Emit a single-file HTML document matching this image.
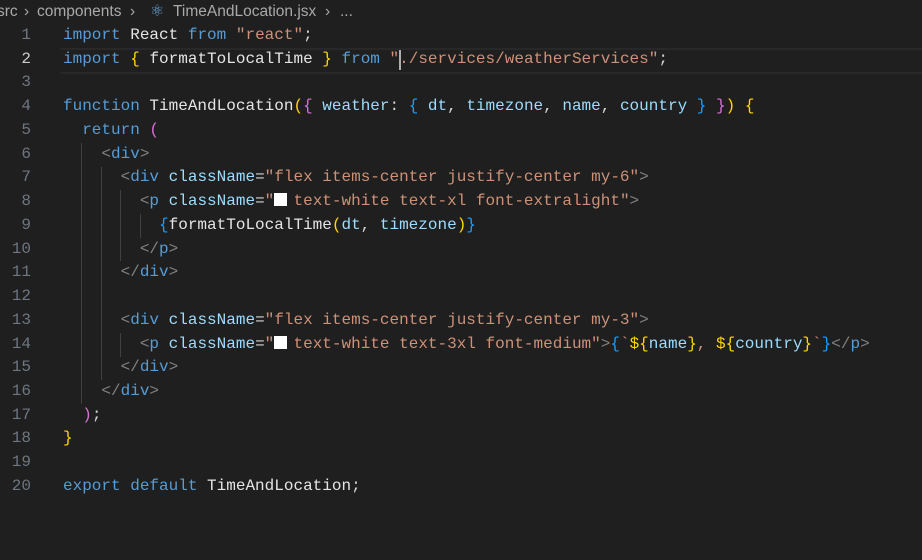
<!DOCTYPE html>
<html><head><meta charset="utf-8"><style>
body{margin:0;width:922px;height:560px;background:#1f1f1f;overflow:hidden;position:relative;font-family:"Liberation Mono",monospace}
.bc{position:absolute;top:2px;font:15.5px "Liberation Sans",sans-serif;color:#a9a9a9;white-space:pre;line-height:20px}
.ln{position:absolute;left:0;width:31px;text-align:right;color:#6e7681;font-size:16px}
.code{position:absolute;left:63px;font-size:16px;color:#d4d4d4}
.row{height:23.74px;line-height:23.74px;position:relative;white-space:pre}
.k{color:#569cd6}.s{color:#ce9178}.v{color:#9cdcfe}.f{color:#dcdcaa}.w{color:#e4e4e4}
.g{color:#ffd700}.p{color:#da70d6}.b{color:#179fff}.t{color:#808080}
.sq{display:inline-block;width:13px;height:13px;background:#fff;vertical-align:-1px;margin-right:-3.4px}
.guide{position:absolute;width:1px;background:#404040}
</style></head><body>
<div class="bc" style="left:-3px">src</div>
<div class="bc" style="left:24px">›</div>
<div class="bc" style="left:37px">components</div>
<div class="bc" style="left:130px">›</div>
<div class="bc" style="left:150px;color:#6aa6d8;font-size:16px">⚛</div>
<div class="bc" style="left:173px">TimeAndLocation.jsx</div>
<div class="bc" style="left:325px">›</div>
<div class="bc" style="left:340px">...</div>
<div style="position:absolute;left:60px;right:0;top:48px;height:22px;border-top:2px solid #282828;border-bottom:2px solid #282828"></div>
<div style="position:absolute;left:399px;top:50px;width:2px;height:20px;background:#aeafad"></div>
<div class="guide" style="left:81px;top:143px;height:261px"></div>
<div class="guide" style="left:101px;top:167px;height:213px"></div>
<div class="guide" style="left:120px;top:190px;height:71px"></div>
<div class="guide" style="left:120px;top:333px;height:24px"></div>
<div class="guide" style="left:140px;top:214px;height:24px"></div>
<div class="ln" style="top:24px"><div class="row">1</div><div class="row" style="color:#ccc">2</div><div class="row">3</div><div class="row">4</div><div class="row">5</div><div class="row">6</div><div class="row">7</div><div class="row">8</div><div class="row">9</div><div class="row">10</div><div class="row">11</div><div class="row">12</div><div class="row">13</div><div class="row">14</div><div class="row">15</div><div class="row">16</div><div class="row">17</div><div class="row">18</div><div class="row">19</div><div class="row">20</div></div>
<div class="code" style="top:24px">
<div class="row"><span class="k">import</span> <span class="w">React</span> <span class="k">from</span> <span class="s">"react"</span>;</div>
<div class="row"><span class="k">import</span> <span class="g">{</span> <span class="w">formatToLocalTime</span> <span class="g">}</span> <span class="k">from</span> <span class="s">"./services/weatherServices"</span>;</div>
<div class="row"> </div>
<div class="row"><span class="k">function</span> <span class="w">TimeAndLocation</span><span class="g">(</span><span class="p">{</span> <span class="v">weather</span>: <span class="b">{</span> <span class="v">dt</span>, <span class="v">timezone</span>, <span class="v">name</span>, <span class="v">country</span> <span class="b">}</span> <span class="p">}</span><span class="g">)</span> <span class="g">{</span></div>
<div class="row">  <span class="k">return</span> <span class="p">(</span></div>
<div class="row">    <span class="t">&lt;</span><span class="k">div</span><span class="t">&gt;</span></div>
<div class="row">      <span class="t">&lt;</span><span class="k">div</span> <span class="v">className</span>=<span class="s">"flex items-center justify-center my-6"</span><span class="t">&gt;</span></div>
<div class="row">        <span class="t">&lt;</span><span class="k">p</span> <span class="v">className</span>=<span class="s">"<span class="sq"></span> text-white text-xl font-extralight"</span><span class="t">&gt;</span></div>
<div class="row">          <span class="b">{</span><span class="w">formatToLocalTime</span><span class="g">(</span><span class="v">dt</span>, <span class="v">timezone</span><span class="g">)</span><span class="b">}</span></div>
<div class="row">        <span class="t">&lt;/</span><span class="k">p</span><span class="t">&gt;</span></div>
<div class="row">      <span class="t">&lt;/</span><span class="k">div</span><span class="t">&gt;</span></div>
<div class="row"> </div>
<div class="row">      <span class="t">&lt;</span><span class="k">div</span> <span class="v">className</span>=<span class="s">"flex items-center justify-center my-3"</span><span class="t">&gt;</span></div>
<div class="row">        <span class="t">&lt;</span><span class="k">p</span> <span class="v">className</span>=<span class="s">"<span class="sq"></span> text-white text-3xl font-medium"</span><span class="t">&gt;</span><span class="b">{</span><span class="s">`</span><span class="g">${</span><span class="v">name</span><span class="g">}</span><span class="s">, </span><span class="g">${</span><span class="v">country</span><span class="g">}</span><span class="s">`</span><span class="b">}</span><span class="t">&lt;/</span><span class="k">p</span><span class="t">&gt;</span></div>
<div class="row">      <span class="t">&lt;/</span><span class="k">div</span><span class="t">&gt;</span></div>
<div class="row">    <span class="t">&lt;/</span><span class="k">div</span><span class="t">&gt;</span></div>
<div class="row">  <span class="p">)</span>;</div>
<div class="row"><span class="g">}</span></div>
<div class="row"> </div>
<div class="row"><span class="k">export</span> <span class="k">default</span> <span class="w">TimeAndLocation</span>;</div>
</div>
</body></html>
